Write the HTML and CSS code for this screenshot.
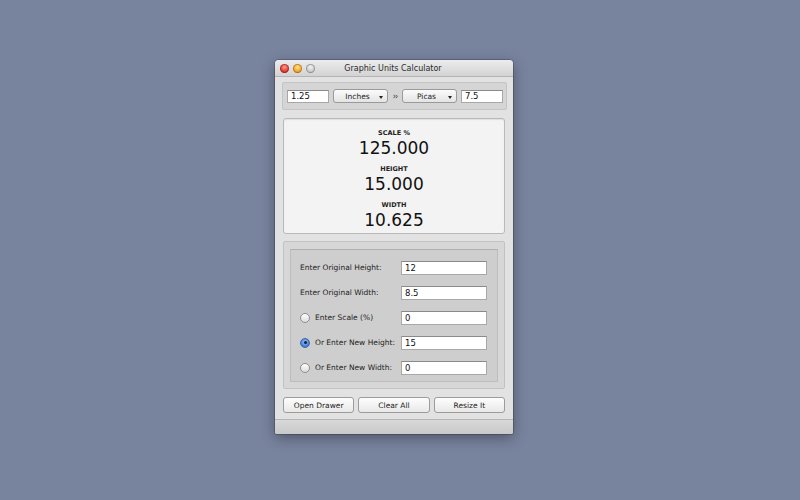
FILE: index.html
```html
<!DOCTYPE html>
<html lang="en">

<head>
  <meta charset="UTF-8">
  <title>Graphic Units Calculator</title>
  <link rel="stylesheet" href="styles.css">
</head>

<body>
  <div class="window">
    <div class="titlebar">
      <div class="lights">
        <span class="light red"></span>
        <span class="light orange"></span>
        <span class="light off"></span>
      </div>
      <div class="title">Graphic Units Calculator</div>
    </div>

    <div class="units-box">
      <div class="field small">1.25</div>
      <div class="popup">Inches<span class="arrow"></span></div>
      <span class="chevrons">&rsaquo;&rsaquo;</span>
      <div class="popup picas">Picas<span class="arrow"></span></div>
      <div class="field small">7.5</div>
    </div>

    <div class="results">
      <div class="result">
        <div class="result-label">SCALE %</div>
        <div class="result-value">125.000</div>
      </div>
      <div class="result">
        <div class="result-label">HEIGHT</div>
        <div class="result-value">15.000</div>
      </div>
      <div class="result">
        <div class="result-label">WIDTH</div>
        <div class="result-value">10.625</div>
      </div>
    </div>

    <div class="form-box">
      <div class="form-inner">
        <div class="row">
          <span class="label">Enter Original Height:</span>
          <div class="field wide">12</div>
        </div>
        <div class="row">
          <span class="label">Enter Original Width:</span>
          <div class="field wide">8.5</div>
        </div>
        <div class="row">
          <span class="label"><span class="radio"></span>Enter Scale (%)</span>
          <div class="field wide">0</div>
        </div>
        <div class="row">
          <span class="label"><span class="radio checked"></span>Or Enter New Height:</span>
          <div class="field wide">15</div>
        </div>
        <div class="row">
          <span class="label"><span class="radio"></span>Or Enter New Width:</span>
          <div class="field wide">0</div>
        </div>
      </div>
    </div>

    <div class="buttons">
      <div class="button">Open Drawer</div>
      <div class="button">Clear All</div>
      <div class="button">Resize It</div>
    </div>

    <div class="bottombar"></div>
  </div>
</body>

</html>
```

FILE: styles.css
```css
body {
  margin: 0;
  height: 500px;
  background-color: #78839e;
  font-family: 'DejaVu Sans', 'Liberation Sans', sans-serif;
  color: #222;
  overflow: hidden;
}

.window {
  margin: 60px 0 0 275px;
  width: 238px;
  height: 374px;
  background-color: #e2e2e2;
  border-radius: 4px 4px 2px 2px;
  box-shadow: 0 4px 14px rgba(0, 0, 0, 0.35), 0 0 0 1px rgba(60, 60, 70, 0.35);
  display: flex;
  flex-direction: column;
  overflow: hidden;
}

.titlebar {
  height: 16px;
  flex-shrink: 0;
  background: linear-gradient(#ececec, #d3d3d3);
  border-bottom: 1px solid #b4b4b4;
  display: flex;
  align-items: center;
}

.lights {
  display: flex;
  gap: 4px;
  padding-left: 5px;
}

.light {
  width: 9px;
  height: 9px;
  border-radius: 50%;
  box-shadow: inset 0 0 0 1px rgba(0, 0, 0, 0.25);
}

.red {
  background: radial-gradient(circle at 50% 35%, #ff9b8e, #e0372b 60%, #a81d14);
}

.orange {
  background: radial-gradient(circle at 50% 35%, #ffe08a, #f3a420 60%, #b8740b);
}

.off {
  background: radial-gradient(circle at 50% 35%, #f2f2f2, #c9c9c9 60%, #a9a9a9);
}

.title {
  flex: 1;
  text-align: center;
  font-size: 8px;
  color: #2a2a2a;
  margin-right: 42px;
}

.units-box {
  margin: 5px 6px 0 7px;
  height: 28px;
  box-sizing: border-box;
  background-color: #d5d5d5;
  border: 1px solid #c4c4c4;
  border-radius: 2px;
  display: flex;
  align-items: center;
  padding-left: 4px;
  gap: 4px;
}

.field {
  background: #fff;
  border: 1px solid #a8a8a8;
  border-top-color: #8a8a8a;
  box-sizing: border-box;
  font-size: 8.5px;
  padding-left: 3px;
  display: flex;
  align-items: center;
  color: #111;
}

.field.small {
  width: 42px;
  height: 13px;
}

.popup {
  width: 55px;
  height: 14px;
  box-sizing: border-box;
  border: 1px solid #9a9a9a;
  border-radius: 3px;
  background: linear-gradient(#fbfbfb, #e4e4e4);
  font-size: 7.5px;
  display: flex;
  align-items: center;
  justify-content: center;
  position: relative;
  padding-right: 6px;
}

.arrow {
  position: absolute;
  right: 4px;
  bottom: 3px;
  border-left: 2px solid transparent;
  border-right: 2px solid transparent;
  border-top: 3px solid #222;
}

.chevrons {
  font-size: 8px;
  color: #333;
  width: 6px;
  text-align: center;
  letter-spacing: -1px;
}

.results {
  margin: 8px 8px 0 8px;
  height: 116px;
  box-sizing: border-box;
  background-color: #f3f3f3;
  border: 1px solid #b9b9b9;
  border-radius: 3px;
  box-shadow: inset 0 1px 1px rgba(0, 0, 0, 0.08);
  display: flex;
  flex-direction: column;
  align-items: center;
  padding-top: 10px;
  gap: 7px;
}

.result {
  text-align: center;
}

.result-label {
  font-size: 6.5px;
  font-weight: bold;
  color: #222;
  line-height: 9px;
}

.result-value {
  font-size: 17px;
  line-height: 20px;
  color: #111;
}

.form-box {
  margin: 7px 8px 0 8px;
  height: 148px;
  background-color: #d7d7d7;
  border: 1px solid #c2c2c2;
  border-radius: 2px;
  padding: 7px 6px 6px 6px;
  box-sizing: border-box;
}

.form-inner {
  height: 100%;
  background-color: #cecece;
  border: 1px solid #bdbdbd;
  border-top-color: #b0b0b0;
  box-sizing: border-box;
  display: flex;
  flex-direction: column;
  padding: 11px 10px 0 9px;
  gap: 12px;
}

.row {
  display: flex;
  align-items: center;
  justify-content: space-between;
  height: 13px;
}

.label {
  font-size: 7.5px;
  color: #222;
  display: flex;
  align-items: center;
}

.radio {
  width: 8px;
  height: 8px;
  border-radius: 50%;
  border: 1px solid #8e8e8e;
  background: linear-gradient(#ffffff, #dcdcdc);
  margin-right: 5px;
  position: relative;
}

.radio.checked {
  border-color: #3a66b0;
  background: radial-gradient(circle at 50% 40%, #9fc5f0, #3f7bd0 70%, #2b5aa8);
}

.radio.checked::after {
  content: "";
  position: absolute;
  left: 2.5px;
  top: 2.5px;
  width: 3px;
  height: 3px;
  border-radius: 50%;
  background: #10204a;
}

.field.wide {
  width: 86px;
  height: 14px;
}

.buttons {
  margin: 8px 8px 0 8px;
  display: flex;
  gap: 4px;
}

.button {
  flex: 1;
  height: 16px;
  box-sizing: border-box;
  border: 1px solid #9c9c9c;
  border-radius: 3px;
  background: linear-gradient(#fdfdfd, #e8e8e8);
  font-size: 7.5px;
  display: flex;
  align-items: center;
  justify-content: center;
  color: #222;
}

.bottombar {
  margin-top: auto;
  height: 14px;
  border-top: 1px solid #b5b5b5;
  background: linear-gradient(#d8d8d8, #c9c9c9);
}
```
